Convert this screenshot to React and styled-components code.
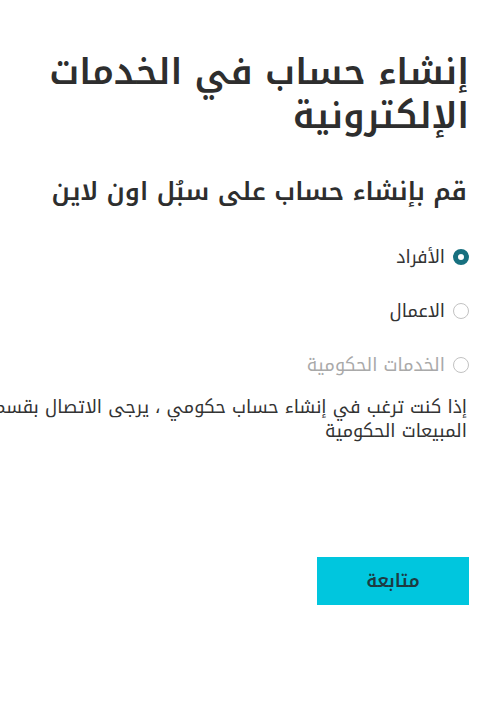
import React, { useState } from 'react';
import styled, { createGlobalStyle } from 'styled-components';

const GlobalStyle = createGlobalStyle`
    html, body {
        margin: 0;
        background: #ffffff;
        overflow-x: hidden;
    }
    body {
        font-family: "Noto Kufi Arabic", "Noto Sans Arabic", sans-serif;
    }
`;

const Page = styled.main`
    direction: rtl;
    padding: 50px 17px 0 17px;
    color: #333333;
`;

const Title = styled.h1`
    margin: 0;
    font-size: 36px;
    font-weight: 600;
    line-height: 44px;
    color: #2e2e2e;
`;

const Subtitle = styled.h2`
    margin: 37px 2px 0 0;
    font-size: 25px;
    font-weight: 600;
    line-height: 34px;
    color: #2e2e2e;
`;

const Options = styled.div`
    margin-top: 36px;
    display: flex;
    flex-direction: column;
    gap: 30px;
`;

const Option = styled.label`
    display: flex;
    align-items: center;
    gap: 8px;
    font-size: 18px;
    line-height: 24px;
    color: ${p => (p.disabled ? '#a9a9a9' : '#333333')};
    cursor: ${p => (p.disabled ? 'default' : 'pointer')};
`;

const Radio = styled.span`
    width: 16px;
    height: 16px;
    box-sizing: border-box;
    border-radius: 50%;
    border: ${p => (p.checked ? '5px solid #17707f' : '1px solid #c2c2c2')};
    background: #ffffff;
    flex-shrink: 0;
`;

const Note = styled.p`
    margin: 18px 2px 0 0;
    width: 500px;
    font-size: 18px;
    line-height: 24px;
    color: #333333;
`;

const Actions = styled.div`
    margin-top: 114px;
    display: flex;
`;

const Button = styled.button`
    width: 152px;
    height: 48px;
    border: none;
    background: #00c6de;
    color: #1d3b42;
    font-family: inherit;
    font-size: 18px;
    font-weight: 600;
    cursor: pointer;
`;

const options = [
    { id: 'individuals', label: 'الأفراد' },
    { id: 'business', label: 'الاعمال' },
    { id: 'gov', label: 'الخدمات الحكومية', disabled: true },
];

export default function App() {
    const [selected, setSelected] = useState('individuals');
    return (
        <>
            <GlobalStyle />
            <Page>
                <Title>إنشاء حساب في الخدمات الإلكترونية</Title>
                <Subtitle>قم بإنشاء حساب على سبُل اون لاين</Subtitle>
                <Options>
                    {options.map(o => (
                        <Option key={o.id} disabled={o.disabled} onClick={() => !o.disabled && setSelected(o.id)}>
                            <Radio checked={selected === o.id} />
                            {o.label}
                        </Option>
                    ))}
                </Options>
                <Note>إذا كنت ترغب في إنشاء حساب حكومي ، يرجى الاتصال بقسم المبيعات الحكومية</Note>
                <Actions>
                    <Button>متابعة</Button>
                </Actions>
            </Page>
        </>
    );
}
